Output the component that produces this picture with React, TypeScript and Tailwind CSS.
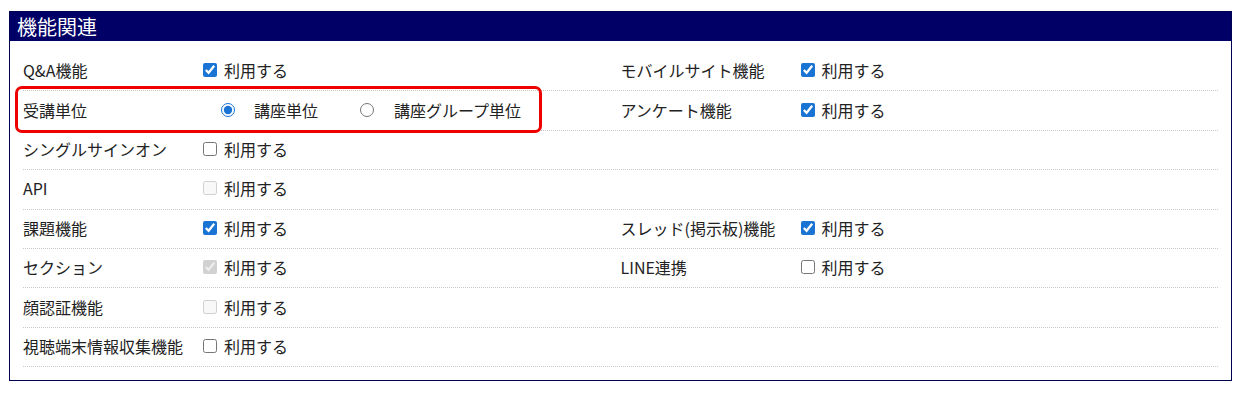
import React from 'react';

type Cell =
  | { label: string; kind: 'check'; checked?: boolean; disabled?: boolean }
  | { label: string; kind: 'radio' }
  | null;

const rows: [Cell, Cell][] = [
  [
    { label: 'Q&A機能', kind: 'check', checked: true },
    { label: 'モバイルサイト機能', kind: 'check', checked: true },
  ],
  [
    { label: '受講単位', kind: 'radio' },
    { label: 'アンケート機能', kind: 'check', checked: true },
  ],
  [{ label: 'シングルサインオン', kind: 'check' }, null],
  [{ label: 'API', kind: 'check', disabled: true }, null],
  [
    { label: '課題機能', kind: 'check', checked: true },
    { label: 'スレッド(掲示板)機能', kind: 'check', checked: true },
  ],
  [
    { label: 'セクション', kind: 'check', checked: true, disabled: true },
    { label: 'LINE連携', kind: 'check' },
  ],
  [{ label: '顔認証機能', kind: 'check', disabled: true }, null],
  [{ label: '視聴端末情報収集機能', kind: 'check' }, null],
];

function Field({ cell }: { cell: Cell }) {
  if (!cell) return <div className="flex-1" />;
  return (
    <div className="flex-1 flex items-center">
      <div className="w-[180px] shrink-0">{cell.label}</div>
      {cell.kind === 'check' ? (
        <label className="flex items-center gap-[7px]">
          <input
            type="checkbox"
            defaultChecked={cell.checked}
            disabled={cell.disabled}
            className="m-0 w-[14px] h-[14px] accent-[#1a74d4]"
          />
          <span>利用する</span>
        </label>
      ) : (
        <div className="flex items-center pl-[18px]">
          <label className="flex items-center gap-[19px]">
            <input
              type="radio"
              name="unit"
              defaultChecked
              className="m-0 w-[14px] h-[14px] accent-[#1a74d4]"
            />
            <span>講座単位</span>
          </label>
          <label className="flex items-center gap-[20px] ml-[42px]">
            <input type="radio" name="unit" className="m-0 w-[14px] h-[14px]" />
            <span>講座グループ単位</span>
          </label>
        </div>
      )}
    </div>
  );
}

export default function App() {
  return (
    <div
      className="bg-white pt-[11px] pl-[9px] pr-[16px] pb-[17px] text-[16px] text-[#222]"
      style={{ fontFamily: '"Noto Sans CJK JP", "Noto Sans", sans-serif' }}
    >
      <div className="relative border border-[#000055]">
        <div className="bg-[#000066] h-[29px] flex items-center px-[7px] text-white text-[20px]">
          機能関連
        </div>
        <div className="pt-[11px] pb-[13px] px-[13px]">
          {rows.map(([l, r], i) => (
            <div
              key={i}
              className="flex h-[39.4px] pb-[2px] border-b border-dotted border-[#c8c8c8]"
            >
              <Field cell={l} />
              <Field cell={r} />
            </div>
          ))}
        </div>
        {/* 受講単位の強調枠 */}
        <div className="absolute left-[5px] top-[74px] w-[527px] h-[47px] border-[3px] border-[#ee0000] rounded-[7px] pointer-events-none" />
      </div>
    </div>
  );
}
